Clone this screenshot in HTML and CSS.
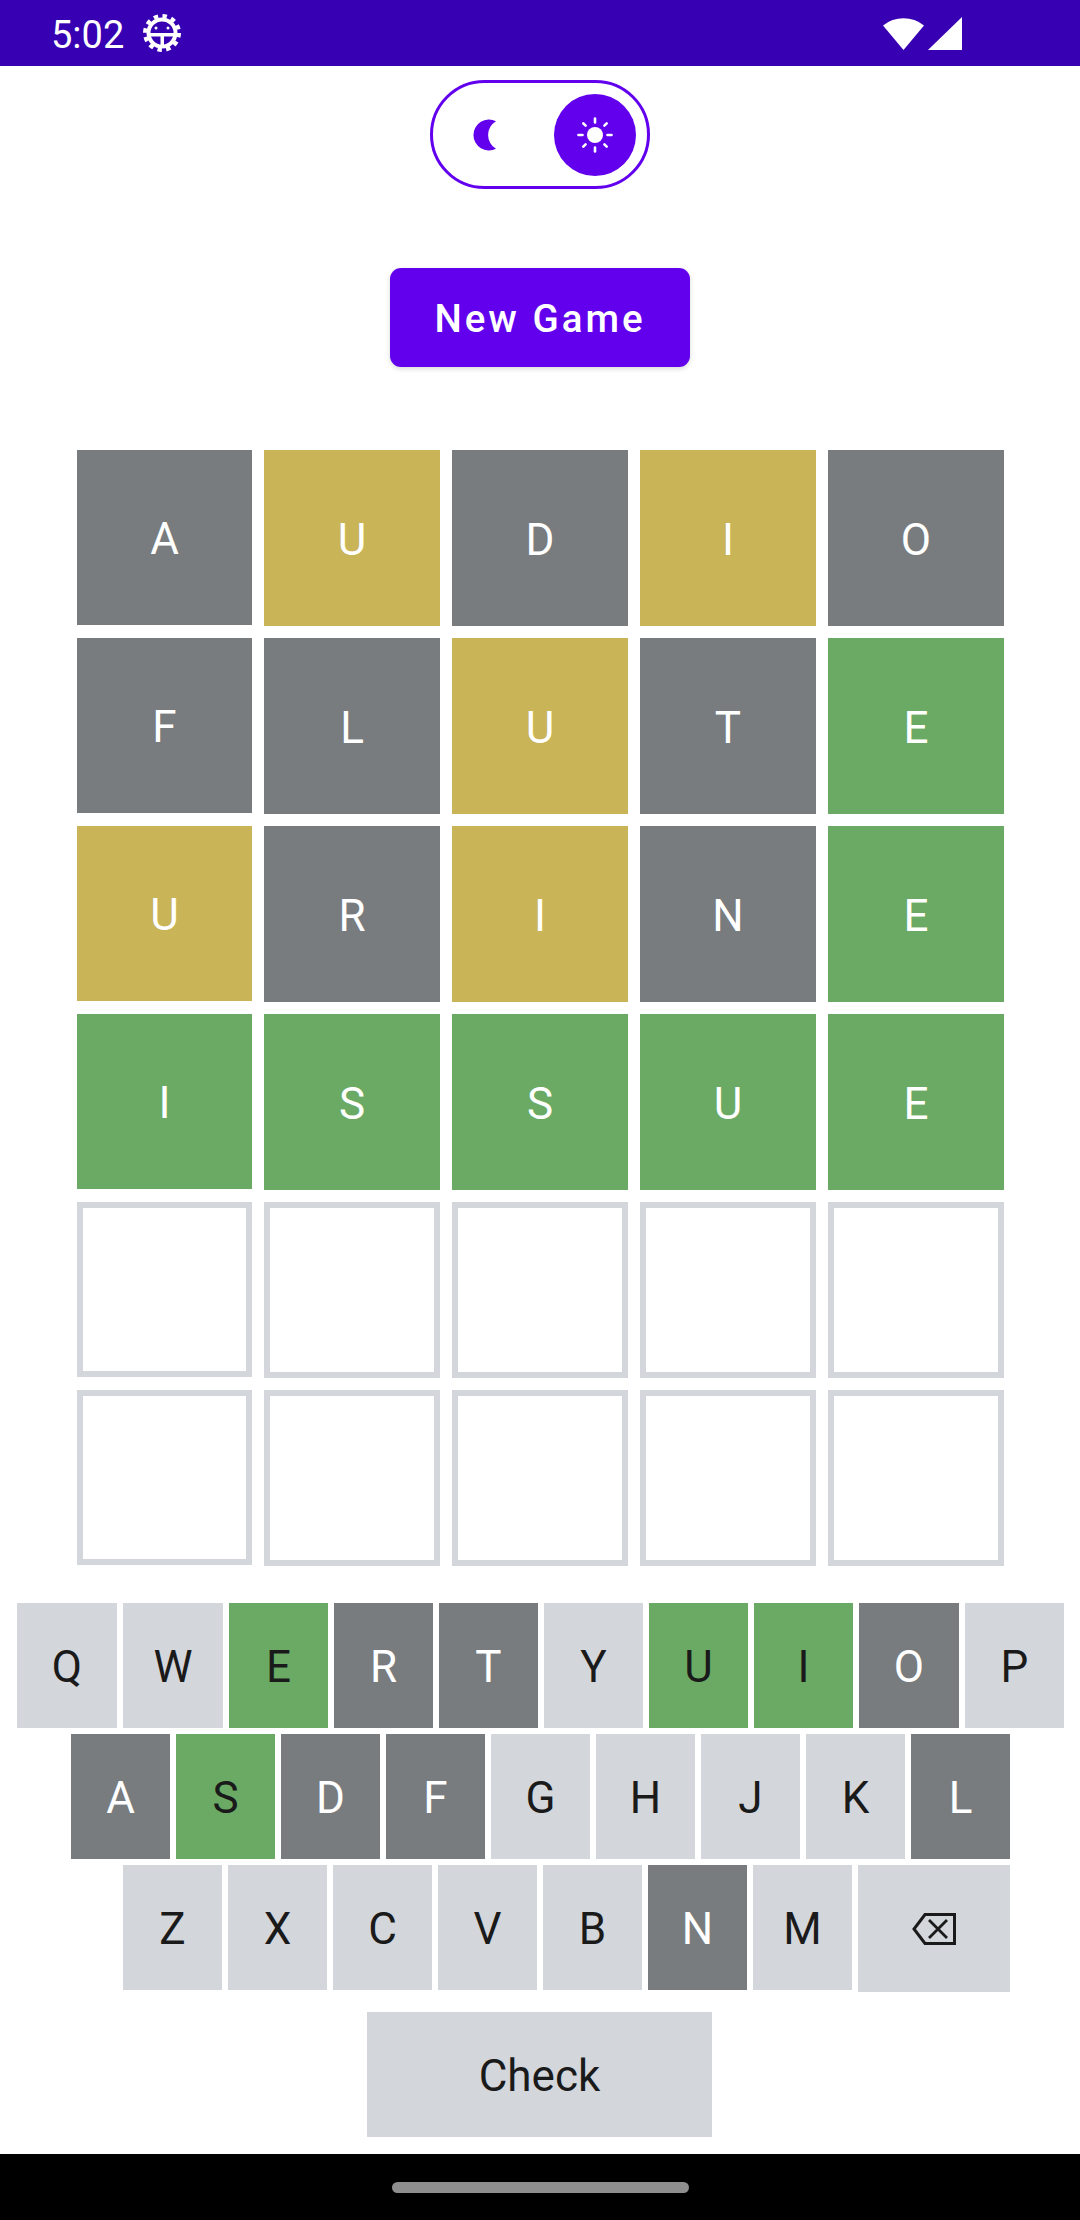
FILE: index.html
```html
<!DOCTYPE html>
<html lang="en">
  <head>
    <meta charset="UTF-8" />
    <meta name="viewport" content="width=device-width, initial-scale=1.0" />
    <title>Wordle</title>
    <link rel="stylesheet" href="styles.css">
  </head>
  <body>
    <div class="status-bar">
      <span class="time">5:02</span>
      <svg class="gear" width="38" height="38" viewBox="0 0 38 38">
        <circle cx="19" cy="19" r="17" fill="none" stroke="#fff" stroke-width="4" stroke-dasharray="4.45 4.45" />
        <circle cx="19" cy="19" r="13.5" fill="none" stroke="#fff" stroke-width="4" />
        <rect x="6" y="19" width="26" height="3.5" fill="#fff" />
        <rect x="17.5" y="21" width="3.5" height="12" fill="#fff" />
        <circle cx="13" cy="14" r="1.5" fill="#fff" />
        <circle cx="25" cy="14" r="1.5" fill="#fff" />
      </svg>
      <div class="status-right">
        <svg width="41" height="34" viewBox="0 0 41 34">
          <path d="M20.5 34 L0 9.5 A33 33 0 0 1 41 9.5 Z" fill="#fff" />
        </svg>
        <svg width="34" height="33" viewBox="0 0 34 33">
          <path d="M0 33 L34 0 V33 Z" fill="#fff" />
        </svg>
      </div>
    </div>

    <div class="toggle">
      <svg class="moon" width="26" height="32" viewBox="0 0 26 32">
        <path d="M24 2.2 A15.5 15.5 0 1 0 24 29.8 A16 16 0 0 1 24 2.2 Z" fill="#6200ee" />
      </svg>
      <div class="knob">
        <svg width="36" height="36" viewBox="0 0 36 36">
          <circle cx="18" cy="18" r="8" fill="#fff" />
          <g stroke="#fff" stroke-width="2.6" stroke-linecap="round">
            <path d="M18 1.5 V5.5" />
            <path d="M18 30.5 V34.5" />
            <path d="M1.5 18 H5.5" />
            <path d="M30.5 18 H34.5" />
            <path d="M6.3 6.3 L8.6 8.6" />
            <path d="M27.4 27.4 L29.7 29.7" />
            <path d="M6.3 29.7 L8.6 27.4" />
            <path d="M27.4 8.6 L29.7 6.3" />
          </g>
        </svg>
      </div>
    </div>

    <button class="new-game">New Game</button>

    <div class="board">
      <div class="tile absent">A</div>
      <div class="tile present">U</div>
      <div class="tile absent">D</div>
      <div class="tile present">I</div>
      <div class="tile absent">O</div>

      <div class="tile absent">F</div>
      <div class="tile absent">L</div>
      <div class="tile present">U</div>
      <div class="tile absent">T</div>
      <div class="tile correct">E</div>

      <div class="tile present">U</div>
      <div class="tile absent">R</div>
      <div class="tile present">I</div>
      <div class="tile absent">N</div>
      <div class="tile correct">E</div>

      <div class="tile correct">I</div>
      <div class="tile correct">S</div>
      <div class="tile correct">S</div>
      <div class="tile correct">U</div>
      <div class="tile correct">E</div>

      <div class="tile empty"></div>
      <div class="tile empty"></div>
      <div class="tile empty"></div>
      <div class="tile empty"></div>
      <div class="tile empty"></div>

      <div class="tile empty"></div>
      <div class="tile empty"></div>
      <div class="tile empty"></div>
      <div class="tile empty"></div>
      <div class="tile empty"></div>
    </div>

    <div class="keyboard">
      <div class="key-row">
        <div class="key wide">Q</div>
        <div class="key wide">W</div>
        <div class="key hit">E</div>
        <div class="key miss">R</div>
        <div class="key miss">T</div>
        <div class="key">Y</div>
        <div class="key hit">U</div>
        <div class="key hit">I</div>
        <div class="key miss wide">O</div>
        <div class="key">P</div>
      </div>
      <div class="key-row">
        <div class="key miss">A</div>
        <div class="key hit">S</div>
        <div class="key miss">D</div>
        <div class="key miss">F</div>
        <div class="key">G</div>
        <div class="key">H</div>
        <div class="key">J</div>
        <div class="key">K</div>
        <div class="key miss">L</div>
      </div>
      <div class="key-row last-row">
        <div class="key">Z</div>
        <div class="key">X</div>
        <div class="key">C</div>
        <div class="key">V</div>
        <div class="key">B</div>
        <div class="key miss">N</div>
        <div class="key">M</div>
        <div class="key backspace">
          <svg width="44" height="32" viewBox="0 0 44 32">
            <path d="M13 1.5 H42.5 V30.5 H13 L2 16 Z" fill="none" stroke="#1a1a1b" stroke-width="3" />
            <path d="M17 7 L35 25 M35 7 L17 25" stroke="#1a1a1b" stroke-width="2.8" />
          </svg>
        </div>
      </div>
      <div class="key check">Check</div>
    </div>

    <div class="nav-bar">
      <div class="home-handle"></div>
    </div>
  </body>
</html>
```

FILE: styles.css
```css
body {
  font-family: Roboto, sans-serif;
  margin: 0;
  height: 2220px;
  background: white;
  display: flex;
  flex-direction: column;
  align-items: center;
  overflow: hidden;
}
.status-bar {
  align-self: stretch;
  height: 66px;
  background: #3700b3;
  color: white;
  display: flex;
  align-items: center;
  padding: 0 118px 0 51px;
}
.time {
  font-size: 38px;
  padding-top: 3px;
  margin-right: 19px;
}
.status-right {
  margin-left: auto;
  display: flex;
  align-items: flex-end;
  gap: 4px;
  height: 34px;
}
.toggle {
  box-sizing: border-box;
  width: 220px;
  height: 109px;
  margin-top: 14px;
  border: 3px solid #6200ee;
  border-radius: 55px;
  display: flex;
  align-items: center;
  padding: 0 11px 0 39px;
  flex-shrink: 0;
}
.knob {
  width: 82px;
  height: 82px;
  margin-left: auto;
  border-radius: 50%;
  background: #6200ee;
  display: flex;
  align-items: center;
  justify-content: center;
}
.new-game {
  width: 300px;
  height: 99px;
  margin-top: 79px;
  padding: 2px 0 0;
  background: #6200ee;
  color: white;
  border: none;
  border-radius: 11px;
  font-family: Roboto, sans-serif;
  font-size: 38.5px;
  font-weight: 500;
  letter-spacing: 3px;
  box-shadow: 0 2px 5px rgba(0, 0, 0, 0.15);
  flex-shrink: 0;
}
.board {
  display: grid;
  grid-template-columns: 175px 176px 176px 176px 176px;
  grid-auto-rows: 176px;
  gap: 12px;
  align-self: flex-start;
  margin: 83px 0 0 77px;
  flex-shrink: 0;
}
.tile {
  box-sizing: border-box;
  display: flex;
  align-items: center;
  justify-content: center;
  padding-top: 3px;
  color: white;
  font-size: 44px;
}
.tile:nth-child(5n + 1) {
  height: 175px;
}
.absent {
  background: #787c7e;
}
.present {
  background: #c9b458;
}
.correct {
  background: #6aaa64;
}
.empty {
  border: 6px solid #d3d6da;
}
.keyboard {
  width: 1047px;
  align-self: flex-start;
  margin: 37px 0 0 17px;
  display: flex;
  flex-direction: column;
  align-items: center;
  gap: 6px;
  flex-shrink: 0;
}
.key-row {
  display: flex;
  justify-content: center;
  align-items: flex-start;
  gap: 6px;
}
.last-row {
  align-self: flex-start;
  margin-left: 106px;
}
.key {
  box-sizing: border-box;
  width: 99px;
  height: 125px;
  padding-top: 3px;
  background: #d3d6da;
  color: #1a1a1b;
  font-size: 44px;
  display: flex;
  align-items: center;
  justify-content: center;
}
.key.wide {
  width: 100px;
}
.key.hit {
  background: #6aaa64;
}
.key.miss {
  background: #787c7e;
  color: white;
}
.key.backspace {
  width: 152px;
  height: 127px;
  padding-top: 0;
}
.key.check {
  width: 345px;
  align-self: flex-start;
  margin: 14px 0 0 350px;
}
.nav-bar {
  align-self: stretch;
  height: 66px;
  margin-top: auto;
  background: black;
  display: flex;
  align-items: center;
  justify-content: center;
}
.home-handle {
  width: 297px;
  height: 11px;
  border-radius: 6px;
  background: #8e8e8e;
}
```
